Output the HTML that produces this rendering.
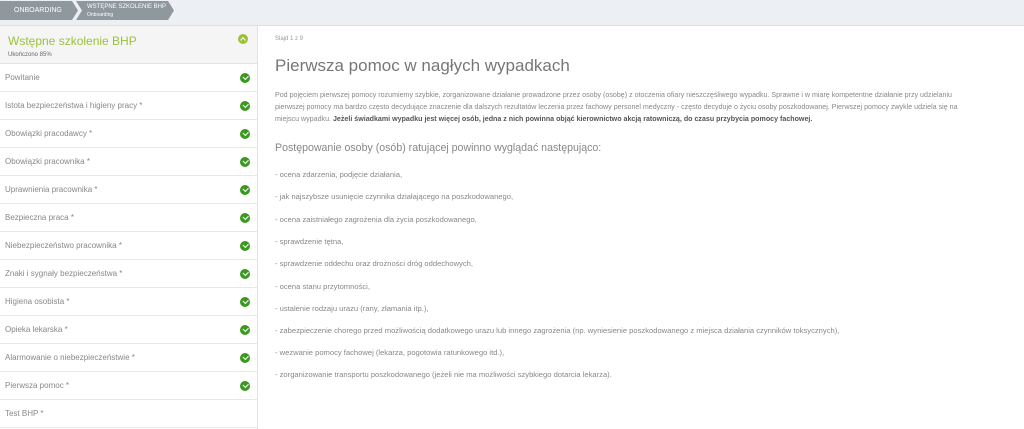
<!DOCTYPE html>
<html><head><meta charset="utf-8"><style>
*{margin:0;padding:0;box-sizing:border-box}
body{width:1024px;height:429px;overflow:hidden;background:#fff;font-family:"Liberation Sans",sans-serif;color:#777;position:relative}
.top{position:absolute;left:0;top:0;width:1024px;height:26px;background:#eceff3;border-bottom:1px solid #dde1e5}
.bc{position:absolute;top:1px;height:19px;background:#8e989d;color:#fff;font-size:7px;white-space:nowrap}
.side{position:absolute;left:0;top:26px;width:258px;height:403px;border-right:1px solid #e3e3e3}
.hd{height:38px;background:#f5f5f5;border-bottom:1px solid #e3e3e3;position:relative}
.it{height:28px;border-bottom:1px solid #e8e8e8;font-size:8px;color:#888;line-height:28px;padding-left:5px;position:relative}
.ck{position:absolute;right:7px;top:9px;width:10px;height:10px;border-radius:50%;background:#3a9a1e}
.ck:after{content:"";position:absolute;left:2.5px;top:2px;width:4px;height:2.5px;border-left:1.5px solid #fff;border-bottom:1.5px solid #fff;transform:rotate(-45deg)}
.c{position:absolute;left:275px;white-space:nowrap}
.p{font-size:7.1px;color:#888}
.l{font-size:7.6px;color:#888}
</style></head><body>
<div class="top">
<div class="bc" style="left:0;width:78px;clip-path:polygon(0 0,72px 0,78px 50%,72px 100%,0 100%);line-height:19px;padding-left:14px">ONBOARDING</div>
<div class="bc" style="left:76px;width:98px;clip-path:polygon(0 0,92px 0,98px 50%,92px 100%,0 100%,6px 50%);padding-left:11px;line-height:8px;padding-top:2px;font-size:6px">WSTĘPNE SZKOLENIE BHP<br><span style="font-size:5px">Onboarding</span></div>
</div>
<div class="side">
<div class="hd"><div style="position:absolute;left:8px;top:8px;font-size:12px;color:#9bc13c">Wstępne szkolenie BHP</div><div style="position:absolute;left:8px;top:26px;font-size:6px;color:#666">Ukończono 85%</div><div style="position:absolute;right:9px;top:8px;width:10px;height:10px;border-radius:50%;background:#9bc13c"><div style="position:absolute;left:3px;top:4px;width:4px;height:4px;border-left:1.5px solid #fff;border-top:1.5px solid #fff;transform:rotate(45deg)"></div></div></div>
<div class="it">Powitanie<span class="ck"></span></div>
<div class="it">Istota bezpieczeństwa i higieny pracy *<span class="ck"></span></div>
<div class="it">Obowiązki pracodawcy *<span class="ck"></span></div>
<div class="it">Obowiązki pracownika *<span class="ck"></span></div>
<div class="it">Uprawnienia pracownika *<span class="ck"></span></div>
<div class="it">Bezpieczna praca *<span class="ck"></span></div>
<div class="it">Niebezpieczeństwo pracownika *<span class="ck"></span></div>
<div class="it">Znaki i sygnały bezpieczeństwa *<span class="ck"></span></div>
<div class="it">Higiena osobista *<span class="ck"></span></div>
<div class="it">Opieka lekarska *<span class="ck"></span></div>
<div class="it">Alarmowanie o niebezpieczeństwie *<span class="ck"></span></div>
<div class="it">Pierwsza pomoc *<span class="ck"></span></div>
<div class="it">Test BHP *</div>
</div>
<div class="c" style="top:36px;font-size:6px;color:#999">Slajd 1 z 9</div>
<div class="c" style="top:56px;font-size:17px;color:#777">Pierwsza pomoc w nagłych wypadkach</div>
<div class="c p" style="top:91px">Pod pojęciem pierwszej pomocy rozumiemy szybkie, zorganizowane działanie prowadzone przez osoby (osobę) z otoczenia ofiary nieszczęśliwego wypadku. Sprawne i w miarę kompetentne działanie przy udzielaniu</div>
<div class="c p" style="top:103px">pierwszej pomocy ma bardzo często decydujące znaczenie dla dalszych rezultatów leczenia przez fachowy personel medyczny - często decyduje o życiu osoby poszkodowanej. Pierwszej pomocy zwykle udziela się na</div>
<div class="c p" style="top:115px">miejscu wypadku. <b style="color:#555">Jeżeli świadkami wypadku jest więcej osób, jedna z nich powinna objąć kierownictwo akcją ratowniczą, do czasu przybycia pomocy fachowej.</b></div>
<div class="c" style="top:142px;font-size:10.6px;color:#888">Postępowanie osoby (osób) ratującej powinno wyglądać następująco:</div>
<div class="c l" style="top:170px">- ocena zdarzenia, podjęcie działania,</div>
<div class="c l" style="top:192px">- jak najszybsze usunięcie czynnika działającego na poszkodowanego,</div>
<div class="c l" style="top:215px">- ocena zaistniałego zagrożenia dla życia poszkodowanego,</div>
<div class="c l" style="top:237px">- sprawdzenie tętna,</div>
<div class="c l" style="top:259px">- sprawdzenie oddechu oraz drożności dróg oddechowych,</div>
<div class="c l" style="top:282px">- ocena stanu przytomności,</div>
<div class="c l" style="top:304px">- ustalenie rodzaju urazu (rany, złamania itp.),</div>
<div class="c l" style="top:326px">- zabezpieczenie chorego przed możliwością dodatkowego urazu lub innego zagrożenia (np. wyniesienie poszkodowanego z miejsca działania czynników toksycznych),</div>
<div class="c l" style="top:348px">- wezwanie pomocy fachowej (lekarza, pogotowia ratunkowego itd.),</div>
<div class="c l" style="top:370px">- zorganizowanie transportu poszkodowanego (jeżeli nie ma możliwości szybkiego dotarcia lekarza).</div>
</body></html>
